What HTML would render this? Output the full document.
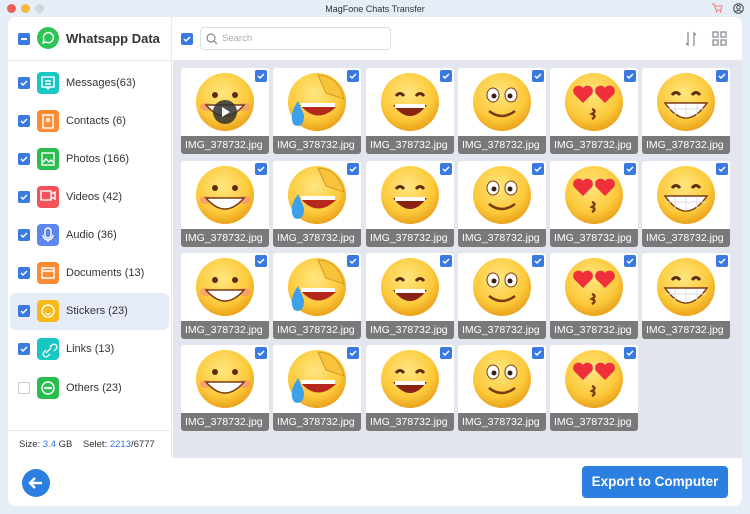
<!DOCTYPE html><html><head><style>
*{margin:0;padding:0;box-sizing:border-box}
body{width:750px;height:514px;background:#e5edf6;font-family:"Liberation Sans",sans-serif;position:relative;overflow:hidden}
.dot{position:absolute;top:4px;width:9px;height:9px;border-radius:50%}
.win{position:absolute;left:8px;top:17px;width:734px;height:489px;background:#fff;border-radius:8px;overflow:hidden}
.a{position:absolute}
.cb{position:absolute;width:12px;height:12px;border-radius:2px;background:#3b79e2}
.cb svg{position:absolute;left:1px;top:1px}
.ic{position:absolute;left:29px;width:22px;height:22px;border-radius:4px}
.lbl{position:absolute;left:58px;font-size:11px;color:#333}
.t{position:absolute;width:88px;height:86px;background:#fff;border-radius:3px;overflow:hidden}
.t .cap{position:absolute;left:0;bottom:0;width:88px;height:18px;background:#797979;color:#fff;font-size:10.5px;line-height:18px;padding-left:4px}
.t svg.e{position:absolute;left:13px;top:3px}
.t .cb{right:2px;top:2px}
</style></head><body>
<div class="dot" style="left:7px;background:#ec5f57"></div>
<div class="dot" style="left:21px;background:#f0b93c"></div>
<div class="dot" style="left:35px;background:#d4d6d8"></div>
<div class="a" style="left:0;width:750px;top:4px;text-align:center;font-size:9px;color:#333">MagFone Chats Transfer</div>
<svg class="a" style="left:712px;top:3px" width="11" height="10"><path d="M0 1h2l2 6h5l1-4H3" stroke="#f47a6b" fill="none"/><circle cx="4.5" cy="8.8" r="0.9" fill="#f47a6b"/><circle cx="8.5" cy="8.8" r="0.9" fill="#f47a6b"/></svg>
<svg class="a" style="left:733px;top:3px" width="11" height="11"><circle cx="5.5" cy="5.5" r="4.8" stroke="#444" fill="none"/><circle cx="5.5" cy="4.3" r="1.8" stroke="#444" fill="none"/><path d="M2.3 9c1-2 5.4-2 6.4 0" stroke="#444" fill="none"/></svg>
<div class="win">
 <!-- sidebar -->
 <div class="a" style="left:0;top:0;width:164px;height:441px;border-right:1px solid #e8eaee"></div>
 <div class="a" style="left:0;top:43px;width:734px;height:1px;background:#e8eaee"></div>
 <div class="cb" style="left:10px;top:16px"><div style="position:absolute;left:3px;top:5px;width:6px;height:2px;background:#fff"></div></div>
 <svg class="a" style="left:29px;top:10px" width="22" height="22"><circle cx="11" cy="11" r="11" fill="#2fc457"/><path d="M6 16l1-3a5 5 0 1 1 2 2z" fill="none" stroke="#fff" stroke-width="1.4"/></svg>
 <div class="a" style="left:58px;top:14px;font-size:13px;font-weight:bold;color:#333">Whatsapp Data</div>
 <div class="a" style="left:2px;top:276px;width:159px;height:37px;background:#e6ebf8;border-radius:6px"></div>
 
 <div class="cb" style="left:10px;top:60px"><svg width="10" height="10"><path d="M2 5l2 2 4-4" stroke="#fff" stroke-width="1.5" fill="none"/></svg></div>
 <div class="ic" style="top:55px;background:#18c6c2"></div><div class="lbl" style="top:60px">Messages(63)</div>
 <div class="cb" style="left:10px;top:98px"><svg width="10" height="10"><path d="M2 5l2 2 4-4" stroke="#fff" stroke-width="1.5" fill="none"/></svg></div>
 <div class="ic" style="top:93px;background:#fb8b35"></div><div class="lbl" style="top:98px">Contacts (6)</div>
 <div class="cb" style="left:10px;top:136px"><svg width="10" height="10"><path d="M2 5l2 2 4-4" stroke="#fff" stroke-width="1.5" fill="none"/></svg></div>
 <div class="ic" style="top:131px;background:#2cbd51"></div><div class="lbl" style="top:136px">Photos (166)</div>
 <div class="cb" style="left:10px;top:174px"><svg width="10" height="10"><path d="M2 5l2 2 4-4" stroke="#fff" stroke-width="1.5" fill="none"/></svg></div>
 <div class="ic" style="top:169px;background:#f4515b"></div><div class="lbl" style="top:174px">Videos (42)</div>
 <div class="cb" style="left:10px;top:212px"><svg width="10" height="10"><path d="M2 5l2 2 4-4" stroke="#fff" stroke-width="1.5" fill="none"/></svg></div>
 <div class="ic" style="top:207px;background:#5d86f0"></div><div class="lbl" style="top:212px">Audio (36)</div>
 <div class="cb" style="left:10px;top:250px"><svg width="10" height="10"><path d="M2 5l2 2 4-4" stroke="#fff" stroke-width="1.5" fill="none"/></svg></div>
 <div class="ic" style="top:245px;background:#fb8b35"></div><div class="lbl" style="top:250px">Documents (13)</div>
 <div class="cb" style="left:10px;top:288px"><svg width="10" height="10"><path d="M2 5l2 2 4-4" stroke="#fff" stroke-width="1.5" fill="none"/></svg></div>
 <div class="ic" style="top:283px;background:#f8b817"></div><div class="lbl" style="top:288px">Stickers (23)</div>
 <div class="cb" style="left:10px;top:326px"><svg width="10" height="10"><path d="M2 5l2 2 4-4" stroke="#fff" stroke-width="1.5" fill="none"/></svg></div>
 <div class="ic" style="top:321px;background:#18c6c2"></div><div class="lbl" style="top:326px">Links (13)</div>
 <div class="cb" style="left:10px;top:365px;background:#fff;border:1px solid #c8cbd0"></div>
 <div class="ic" style="top:360px;background:#2cbd51"></div><div class="lbl" style="top:365px">Others (23)</div>
 <svg class="a" style="left:29px;top:55px" width="22" height="360" fill="none" stroke="#fff" stroke-width="1.4">
  <rect x="5" y="5" width="12" height="10"/><path d="M8 9h6M8 12h6M9 15l2 2 2-2"/>
  <rect x="6" y="43" width="10" height="13"/><circle cx="11" cy="48" r="1.5"/>
  <rect x="5" y="81" width="12" height="12"/><path d="M5 91l4-4 3 3 2-2 3 3"/>
  <rect x="4" y="119" width="10" height="9"/><path d="M14 122l4-2v7l-4-2"/>
  <rect x="8" y="156" width="6" height="10" rx="3"/><path d="M6 163a5 5 0 0 0 10 0M11 168v2"/>
  <path d="M5 196h12v10H5zM5 199h12"/>
  <circle cx="11" cy="239" r="6"/><path d="M8.5 241a3 3 0 0 0 5 0"/>
  <path d="M9 278l-2 2a2.5 2.5 0 0 0 4 4l2-2M13 275l2-2a2.5 2.5 0 0 1 4 4l-2 2M9 281l5-5"/>
  <circle cx="11" cy="316" r="6"/><circle cx="8.5" cy="316" r=".6" fill="#fff"/><circle cx="11" cy="316" r=".6" fill="#fff"/><circle cx="13.5" cy="316" r=".6" fill="#fff"/>
 </svg>
 <div class="a" style="left:0;top:413px;width:164px;height:1px;background:#e8eaee"></div>
 <div class="a" style="left:11px;top:422px;font-size:9.5px;color:#333">Size: <span style="color:#2f7be6">3.4</span> GB &nbsp;&nbsp;&nbsp;Selet: <span style="color:#2f7be6">2213</span>/6777</div>
 <!-- toolbar -->
 <div class="cb" style="left:173px;top:16px"><svg width="10" height="10"><path d="M2 5l2 2 4-4" stroke="#fff" stroke-width="1.5" fill="none"/></svg></div>
 <div class="a" style="left:192px;top:10px;width:191px;height:23px;border:1px solid #dcdfe4;border-radius:4px"></div>
 <svg class="a" style="left:198px;top:16px" width="12" height="12"><circle cx="5" cy="5" r="4" stroke="#888" fill="none" stroke-width="1.2"/><path d="M8 8l3 3" stroke="#888" stroke-width="1.2"/></svg>
 <div class="a" style="left:214px;top:16px;font-size:9.5px;color:#aaa">Search</div>
 <svg class="a" style="left:676px;top:14px" width="14" height="16" stroke="#8a8f99" fill="none" stroke-width="1.3"><path d="M4 1v13l-2-2M10 15V2l2 2"/></svg>
 <svg class="a" style="left:704px;top:14px" width="16" height="16" stroke="#8a8f99" fill="none" stroke-width="1.3"><rect x="1" y="1" width="5" height="5"/><rect x="9" y="1" width="5" height="5"/><rect x="1" y="9" width="5" height="5"/><rect x="9" y="9" width="5" height="5"/></svg>
 <!-- grid bg -->
 <div class="a" style="left:165px;top:44px;width:569px;height:397px;background:#e3e6ee"></div>
 <!-- bottom -->
 <svg class="a" style="left:14px;top:452px" width="28" height="28"><circle cx="14" cy="14" r="14" fill="#2a7fe0"/><path d="M20 14H8M13 9l-5 5 5 5" stroke="#fff" stroke-width="2.4" fill="none"/></svg>
 <div class="a" style="left:574px;top:449px;width:146px;height:32px;background:#2a7fe0;border-radius:4px;color:#fff;font-size:13.5px;font-weight:bold;text-align:center;line-height:32px">Export to Computer</div>
</div>
<svg width="0" height="0" style="position:absolute">
<defs>
<radialGradient id="y" cx="45%" cy="35%" r="65%"><stop offset="0" stop-color="#ffe680"/><stop offset=".7" stop-color="#fcc93a"/><stop offset="1" stop-color="#eaa21c"/></radialGradient>
<symbol id="e1" viewBox="0 0 62 62"><circle cx="31" cy="31" r="29" fill="url(#y)"/><ellipse cx="12" cy="36" rx="6" ry="4" fill="#f6907a" opacity=".7"/><ellipse cx="50" cy="36" rx="6" ry="4" fill="#f6907a" opacity=".7"/><circle cx="21" cy="24" r="3" fill="#5a2e12"/><circle cx="41" cy="24" r="3" fill="#5a2e12"/><path d="M12 34q19 22 38 0z" fill="#fff" stroke="#7a3a12" stroke-width="1.5"/></symbol>
<symbol id="e2" viewBox="0 0 62 62"><circle cx="31" cy="31" r="29" fill="url(#y)"/><path d="M14 34q17 20 36 2z" fill="#b5291d"/><path d="M15 34h34" stroke="#fff" stroke-width="4"/><path d="M32 4q20 0 26 24l-18-6z" fill="#f7c33a" stroke="#d49a20"/><path d="M12 30q-10 14 -4 24q10 4 10-10z" fill="#3ca0ea"/></symbol>
<symbol id="e3" viewBox="0 0 62 62"><circle cx="31" cy="31" r="29" fill="url(#y)"/><path d="M17 25q4-5 8 0M37 25q4-5 8 0" stroke="#5a2e12" stroke-width="3" fill="none"/><path d="M14 34q17 22 34 0z" fill="#8a2412"/><path d="M16 35h30" stroke="#fff" stroke-width="4"/></symbol>
<symbol id="e4" viewBox="0 0 62 62"><circle cx="31" cy="31" r="29" fill="url(#y)"/><ellipse cx="22" cy="24" rx="6" ry="7" fill="#fff" stroke="#7a3a12"/><ellipse cx="40" cy="24" rx="6" ry="7" fill="#fff" stroke="#7a3a12"/><circle cx="23" cy="25" r="2.5" fill="#3a1e0c"/><circle cx="39" cy="25" r="2.5" fill="#3a1e0c"/><path d="M18 40q13 10 26 0" stroke="#7a3a12" stroke-width="2.5" fill="none"/></symbol>
<symbol id="e5" viewBox="0 0 62 62"><circle cx="31" cy="31" r="29" fill="url(#y)"/><path d="M20 32l-9-9a5 5 0 0 1 9-6 5 5 0 0 1 9 6z" fill="#ef2f3a"/><path d="M42 32l-9-9a5 5 0 0 1 9-6 5 5 0 0 1 9 6z" fill="#ef2f3a"/><path d="M29 38q5 2 0 5q5 2 0 5" stroke="#7a3a12" stroke-width="2.5" fill="none"/></symbol>
<symbol id="e6" viewBox="0 0 62 62"><circle cx="31" cy="31" r="29" fill="url(#y)"/><path d="M17 24q4-5 8 0M37 24q4-5 8 0" stroke="#5a2e12" stroke-width="3" fill="none"/><path d="M10 32q21 30 42 0z" fill="#fff" stroke="#7a3a12" stroke-width="1.5"/><path d="M11 38h40M20 33v12M31 33v14M42 33v12" stroke="#ddd"/></symbol>
<symbol id="ck" viewBox="0 0 12 12"><rect width="12" height="12" rx="2" fill="#3b79e2"/><path d="M3 6l2 2 4-4" stroke="#fff" stroke-width="1.5" fill="none"/></symbol>
</defs></svg>
<!-- tiles -->
<div class="t" style="left:181px;top:68px"><svg class="e" width="62" height="62"><use href="#e1"/></svg><svg class="a" style="left:32px;top:32px" width="24" height="24"><circle cx="12" cy="12" r="12" fill="#333" opacity=".85"/><path d="M9 7l8 5-8 5z" fill="#fff"/></svg><svg class="a" style="right:2px;top:2px" width="12" height="12"><use href="#ck"/></svg><div class="cap">IMG_378732.jpg</div></div>
<div class="t" style="left:273px;top:68px"><svg class="e" width="62" height="62"><use href="#e2"/></svg><svg class="a" style="right:2px;top:2px" width="12" height="12"><use href="#ck"/></svg><div class="cap">IMG_378732.jpg</div></div>
<div class="t" style="left:366px;top:68px"><svg class="e" width="62" height="62"><use href="#e3"/></svg><svg class="a" style="right:2px;top:2px" width="12" height="12"><use href="#ck"/></svg><div class="cap">IMG_378732.jpg</div></div>
<div class="t" style="left:458px;top:68px"><svg class="e" width="62" height="62"><use href="#e4"/></svg><svg class="a" style="right:2px;top:2px" width="12" height="12"><use href="#ck"/></svg><div class="cap">IMG_378732.jpg</div></div>
<div class="t" style="left:550px;top:68px"><svg class="e" width="62" height="62"><use href="#e5"/></svg><svg class="a" style="right:2px;top:2px" width="12" height="12"><use href="#ck"/></svg><div class="cap">IMG_378732.jpg</div></div>
<div class="t" style="left:642px;top:68px"><svg class="e" width="62" height="62"><use href="#e6"/></svg><svg class="a" style="right:2px;top:2px" width="12" height="12"><use href="#ck"/></svg><div class="cap">IMG_378732.jpg</div></div>

<div class="t" style="left:181px;top:161px"><svg class="e" width="62" height="62"><use href="#e1"/></svg><svg class="a" style="right:2px;top:2px" width="12" height="12"><use href="#ck"/></svg><div class="cap">IMG_378732.jpg</div></div>
<div class="t" style="left:273px;top:161px"><svg class="e" width="62" height="62"><use href="#e2"/></svg><svg class="a" style="right:2px;top:2px" width="12" height="12"><use href="#ck"/></svg><div class="cap">IMG_378732.jpg</div></div>
<div class="t" style="left:366px;top:161px"><svg class="e" width="62" height="62"><use href="#e3"/></svg><svg class="a" style="right:2px;top:2px" width="12" height="12"><use href="#ck"/></svg><div class="cap">IMG_378732.jpg</div></div>
<div class="t" style="left:458px;top:161px"><svg class="e" width="62" height="62"><use href="#e4"/></svg><svg class="a" style="right:2px;top:2px" width="12" height="12"><use href="#ck"/></svg><div class="cap">IMG_378732.jpg</div></div>
<div class="t" style="left:550px;top:161px"><svg class="e" width="62" height="62"><use href="#e5"/></svg><svg class="a" style="right:2px;top:2px" width="12" height="12"><use href="#ck"/></svg><div class="cap">IMG_378732.jpg</div></div>
<div class="t" style="left:642px;top:161px"><svg class="e" width="62" height="62"><use href="#e6"/></svg><svg class="a" style="right:2px;top:2px" width="12" height="12"><use href="#ck"/></svg><div class="cap">IMG_378732.jpg</div></div>

<div class="t" style="left:181px;top:253px"><svg class="e" width="62" height="62"><use href="#e1"/></svg><svg class="a" style="right:2px;top:2px" width="12" height="12"><use href="#ck"/></svg><div class="cap">IMG_378732.jpg</div></div>
<div class="t" style="left:273px;top:253px"><svg class="e" width="62" height="62"><use href="#e2"/></svg><svg class="a" style="right:2px;top:2px" width="12" height="12"><use href="#ck"/></svg><div class="cap">IMG_378732.jpg</div></div>
<div class="t" style="left:366px;top:253px"><svg class="e" width="62" height="62"><use href="#e3"/></svg><svg class="a" style="right:2px;top:2px" width="12" height="12"><use href="#ck"/></svg><div class="cap">IMG_378732.jpg</div></div>
<div class="t" style="left:458px;top:253px"><svg class="e" width="62" height="62"><use href="#e4"/></svg><svg class="a" style="right:2px;top:2px" width="12" height="12"><use href="#ck"/></svg><div class="cap">IMG_378732.jpg</div></div>
<div class="t" style="left:550px;top:253px"><svg class="e" width="62" height="62"><use href="#e5"/></svg><svg class="a" style="right:2px;top:2px" width="12" height="12"><use href="#ck"/></svg><div class="cap">IMG_378732.jpg</div></div>
<div class="t" style="left:642px;top:253px"><svg class="e" width="62" height="62"><use href="#e6"/></svg><svg class="a" style="right:2px;top:2px" width="12" height="12"><use href="#ck"/></svg><div class="cap">IMG_378732.jpg</div></div>

<div class="t" style="left:181px;top:345px"><svg class="e" width="62" height="62"><use href="#e1"/></svg><svg class="a" style="right:2px;top:2px" width="12" height="12"><use href="#ck"/></svg><div class="cap">IMG_378732.jpg</div></div>
<div class="t" style="left:273px;top:345px"><svg class="e" width="62" height="62"><use href="#e2"/></svg><svg class="a" style="right:2px;top:2px" width="12" height="12"><use href="#ck"/></svg><div class="cap">IMG_378732.jpg</div></div>
<div class="t" style="left:366px;top:345px"><svg class="e" width="62" height="62"><use href="#e3"/></svg><svg class="a" style="right:2px;top:2px" width="12" height="12"><use href="#ck"/></svg><div class="cap">IMG_378732.jpg</div></div>
<div class="t" style="left:458px;top:345px"><svg class="e" width="62" height="62"><use href="#e4"/></svg><svg class="a" style="right:2px;top:2px" width="12" height="12"><use href="#ck"/></svg><div class="cap">IMG_378732.jpg</div></div>
<div class="t" style="left:550px;top:345px"><svg class="e" width="62" height="62"><use href="#e5"/></svg><svg class="a" style="right:2px;top:2px" width="12" height="12"><use href="#ck"/></svg><div class="cap">IMG_378732.jpg</div></div>
</body></html>
